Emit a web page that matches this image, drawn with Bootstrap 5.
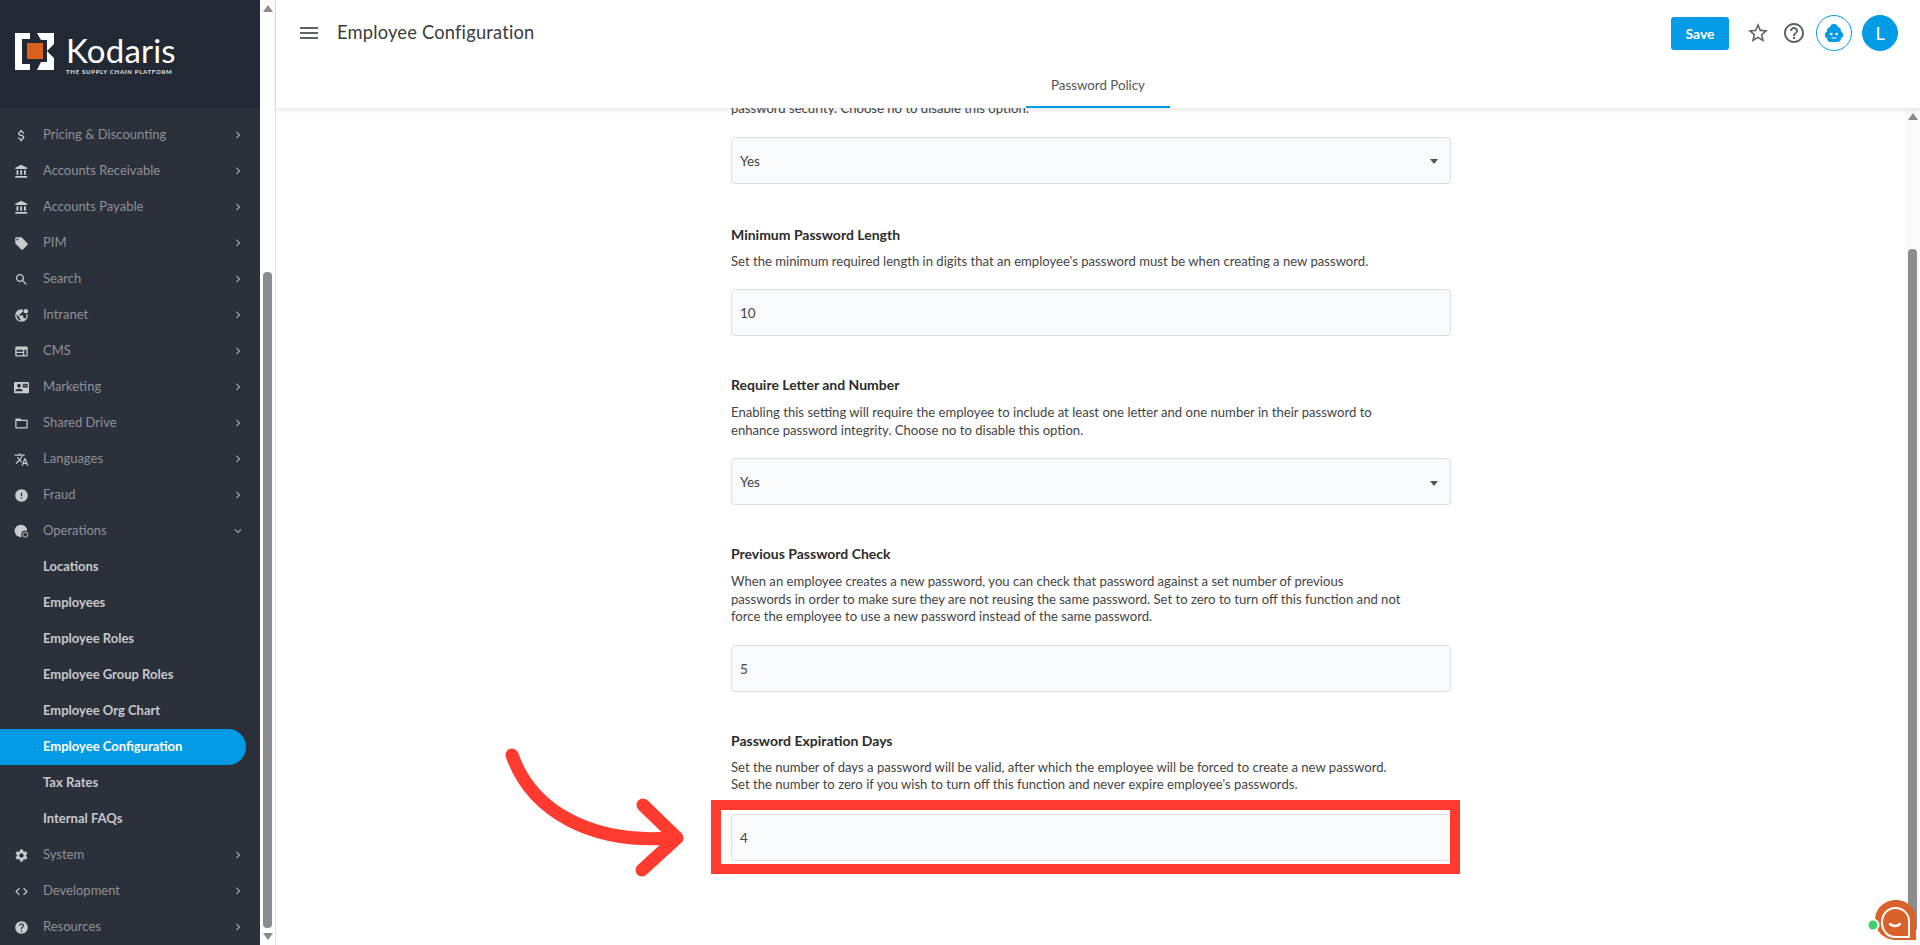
<!DOCTYPE html>
<html lang="en">
<head>
  <meta charset="UTF-8" />
  <title>Employee Configuration</title>
  <link href="https://cdn.jsdelivr.net/npm/bootstrap@5.3.0/dist/css/bootstrap.min.css" rel="stylesheet" />
  <style>
    html, body { height: 100%; overflow: hidden; }
    body { font-family: Lato, "Open Sans", sans-serif; color: #333; background: #fff; }
    svg { fill: currentColor; display: block; }

    .side-wrap { width: 276px; flex: none; border-right: 1px solid #e3e3e3; }
    .side-col { width: 260px; background: #2b303b; }
    .side-logo { height: 108px; background: #232934; padding: 32px 0 0 15px; gap: 11px; }
    .logo-name { font-size: 33px; line-height: 30px; color: #fff; letter-spacing: .2px; margin-top: 3px; }
    .logo-tag { font-size: 6px; line-height: 7px; color: #e6e6e6; font-weight: 700; letter-spacing: .72px; white-space: nowrap; margin-top: 3px; }
    .side-menu { padding-top: 9px; }
    .menu-row { height: 36px; font-size: 13px; color: #8e9196; padding-left: 14px; }
    .menu-icon { width: 15px; height: 15px; margin-right: 14px; color: #c9cbce; flex: none; }
    .menu-arrow { width: 14px; height: 14px; margin: 0 15px 0 auto; color: #a4a8ae; flex: none; }
    .menu-sub { color: #c6c8cb; font-weight: 700; padding-left: 43px; }
    .menu-on { background: #039be5; color: #fff; width: 246px; border-radius: 0 18px 18px 0; }

    .bar-track { width: 15px; flex: none; }
    .bar-soft { background: #fafafa; }
    .bar-up { width: 0; height: 0; border: 5px solid transparent; border-top: 0; border-bottom: 7px solid #8a8a8a; margin: 5px auto 0; }
    .bar-down { width: 0; height: 0; border: 5px solid transparent; border-bottom: 0; border-top: 7px solid #8a8a8a; margin: 0 auto 4px; }
    .bar-thumb { width: 9px; background: #8c8c8c; border-radius: 4px; margin: 0 auto; }
    .thumb-side { margin-top: 260px; height: 656px; margin-bottom: 5px; }
    .thumb-main { margin-top: 129px; height: 683px; }

    .top-head { height: 108px; box-shadow: 0 2px 5px rgba(0,0,0,.1); position: relative; z-index: 2; background: #fff; }
    .head-line { height: 66px; padding: 0 22px 0 21px; }
    .page-name { font-size: 18.3px; color: #3b3b3b; margin-left: 16px; letter-spacing: .2px; }
    .btn-store { background: #039be5; color: #fff; font-size: 14px; font-weight: 700; width: 58px; height: 33px; padding: 0; border-radius: 3px; border: 0; margin-right: 17px; }
    .btn-store:hover { background: #039be5; color: #fff; }
    .head-icon { width: 24px; height: 24px; color: #5f6368; }
    .icon-star { margin-right: 12px; }
    .icon-help { margin-right: 10px; }
    .round-btn { width: 36px; height: 36px; border-radius: 50%; border: 1px solid #039be5; color: #039be5; }
    .round-user { background: #039be5; color: #fff; font-size: 18px; margin-left: 10px; }
    .tab-on { width: 144px; height: 42px; font-size: 13.3px; color: #555; border-bottom: 2px solid #039be5; }

    .body-row { height: 837px; }
    .form-scroll { overflow: hidden; }
    .form-col { width: 720px; margin: -8px auto 0 455px; font-size: 13.1px; line-height: 17.5px; color: #444; }
    .form-col p { margin: 0; width: 672px; }
    .field-name { font-size: 14px; font-weight: 700; color: #2c2c2c; line-height: 18px; margin-top: 40px; }
    .form-col .field-help { margin-top: 10px; }
    .form-col .help-tight { margin-top: 9px; }
    .field-box { height: 47px; background: #f9fafc; border: 1px solid #dcdee2; border-radius: 4px; padding: 3px 8px 0; font-size: 13.5px; color: #444; margin-top: 19px; }
    .box-far { margin-top: 20px; }
    .name-far { margin-top: 42px; }
    .field-caret { width: 0; height: 0; border: 4px solid transparent; border-top: 5px solid #555; border-bottom: 0; margin-left: auto; margin-right: 4px; }

    .mark-box { position: absolute; left: 711px; top: 800px; width: 749px; height: 74px; border: 10px solid #ff3b30; }
    .mark-arrow { position: absolute; left: 500px; top: 740px; fill: none; }
    .chat-bubble { position: absolute; left: 1866px; top: 898px; }
  </style>
</head>
<body class="d-flex">

  <!-- Sidebar -->
  <div class="side-wrap d-flex">
    <div class="side-col d-flex flex-column">
      <div class="side-logo d-flex">
        <svg width="40" height="40" viewBox="0 0 40 40">
          <path fill="#fff" d="M0 1H15V7H7V32H15V38H0z" />
          <path fill="#fff" d="M22 1H39V12L32 19L39 26V38H22L26 30H32V8H26z" />
          <rect x="8" y="8" width="24" height="22" fill="#232934" />
          <rect x="12" y="11" width="16" height="16" fill="#d9601f" />
        </svg>
        <div>
          <div class="logo-name">Kodaris</div>
          <div class="logo-tag">THE SUPPLY CHAIN PLATFORM</div>
        </div>
      </div>
      <div class="side-menu" id="side-menu"></div>
    </div>
    <div class="bar-track d-flex flex-column">
      <div class="bar-up"></div>
      <div class="bar-thumb thumb-side"></div>
      <div class="bar-down"></div>
    </div>
  </div>

  <!-- Main -->
  <div class="flex-grow-1 d-flex flex-column">
    <div class="top-head">
      <div class="head-line d-flex align-items-center">
        <svg class="head-icon" viewBox="0 0 24 24"><path d="M3 18h18v-2H3v2zm0-5h18v-2H3v2zm0-7v2h18V6H3z" /></svg>
        <span class="page-name">Employee Configuration</span>
        <div class="ms-auto d-flex align-items-center">
          <button class="btn btn-store">Save</button>
          <svg class="head-icon icon-star" viewBox="0 0 24 24"><path d="M22 9.24l-7.19-.62L12 2 9.19 8.63 2 9.24l5.46 4.73L5.82 21 12 17.27 18.18 21l-1.63-7.03L22 9.24zM12 15.4l-3.76 2.27 1-4.28-3.32-2.88 4.38-.38L12 6.1l1.71 4.04 4.38.38-3.32 2.88 1 4.28L12 15.4z" /></svg>
          <svg class="head-icon icon-help" viewBox="0 0 24 24"><path d="M11 18h2v-2h-2v2zm1-16C6.48 2 2 6.48 2 12s4.48 10 10 10 10-4.48 10-10S17.52 2 12 2zm0 18c-4.41 0-8-3.59-8-8s3.59-8 8-8 8 3.59 8 8-3.59 8-8 8zm0-14c-2.21 0-4 1.79-4 4h2c0-1.1.9-2 2-2s2 .9 2 2c0 2-3 1.75-3 5h2c0-2.25 3-2.5 3-5 0-2.21-1.79-4-4-4z" /></svg>
          <div class="round-btn d-flex align-items-center justify-content-center">
            <svg width="24" height="24" viewBox="0 0 24 24">
              <circle cx="12" cy="7" r="4" />
              <rect x="5" y="6" width="14" height="15" rx="4" />
              <rect x="3" y="11" width="18" height="6" rx="2" />
              <circle cx="9.300" cy="13" r="1.300" fill="#fff" />
              <circle cx="14.700" cy="13" r="1.300" fill="#fff" />
              <rect x="9.500" y="16.500" width="5" height="1" fill="#fff" />
            </svg>
          </div>
          <div class="round-btn round-user d-flex align-items-center justify-content-center">L</div>
        </div>
      </div>
      <div class="d-flex justify-content-center">
        <div class="tab-on d-flex align-items-center justify-content-center">Password Policy</div>
      </div>
    </div>

    <div class="body-row d-flex">
      <div class="form-scroll flex-grow-1">
        <div class="form-col">
          <p>password security. Choose no to disable this option.</p>
          <div class="field-box d-flex align-items-center">Yes<span class="field-caret"></span></div>

          <div class="field-name name-far">Minimum Password Length</div>
          <p class="help-tight">Set the minimum required length in digits that an employee's password must be when creating a new password.</p>
          <div class="field-box d-flex align-items-center">10</div>

          <div class="field-name">Require Letter and Number</div>
          <p class="field-help">Enabling this setting will require the employee to include at least one letter and one number in their password to enhance password integrity. Choose no to disable this option.</p>
          <div class="field-box d-flex align-items-center">Yes<span class="field-caret"></span></div>

          <div class="field-name">Previous Password Check</div>
          <p class="field-help">When an employee creates a new password, you can check that password against a set number of previous passwords in order to make sure they are not reusing the same password. Set to zero to turn off this function and not force the employee to use a new password instead of the same password.</p>
          <div class="field-box d-flex align-items-center">5</div>

          <div class="field-name">Password Expiration Days</div>
          <p class="help-tight">Set the number of days a password will be valid, after which the employee will be forced to create a new password. Set the number to zero if you wish to turn off this function and never expire employee's passwords.</p>
          <div class="field-box box-far d-flex align-items-center">4</div>
        </div>
      </div>
      <div class="bar-track bar-soft d-flex flex-column">
        <div class="bar-up"></div>
        <div class="bar-thumb thumb-main"></div>
      </div>
    </div>
  </div>

  <!-- Annotation -->
  <div class="mark-box"></div>
  <svg class="mark-arrow" width="190" height="140" viewBox="0 0 190 140" stroke="#ff3b30" stroke-width="13" stroke-linecap="round" stroke-linejoin="round">
    <path fill="none" d="M12 15C32 72 92 104 172 98" />
    <path fill="none" d="M143 65l34 33-35 32" />
  </svg>

  <svg class="chat-bubble" width="52" height="46" viewBox="0 0 52 46">
    <path fill="#d9622b" d="M30 2C42 2 50 11 50 23V42H30C18 42 9 33 9 22C9 11 18 2 30 2z" />
    <path fill="none" stroke="#fff" stroke-width="2" d="M29.500 10C37 10 43 16 43 23V39H29.500C22 39 16 33 16 24.500C16 16 22 10 29.500 10z" />
    <path fill="none" stroke="#fff" stroke-width="2.500" stroke-linecap="round" d="M24 26c3 2.500 7 2.500 10 0" />
    <circle cx="7" cy="27" r="6.500" fill="#fff" />
    <circle cx="7" cy="27" r="4.500" fill="#3fce70" />
  </svg>

  <script src="https://cdn.jsdelivr.net/npm/bootstrap@5.3.0/dist/js/bootstrap.bundle.min.js"></script>
  <script>
    const p = {
      money: '<path d="M11.8 10.9c-2.27-.59-3-1.2-3-2.15 0-1.09 1.01-1.85 2.7-1.85 1.78 0 2.44.85 2.5 2.1h2.21c-.07-1.72-1.12-3.3-3.21-3.81V3h-3v2.16c-1.94.42-3.5 1.68-3.5 3.61 0 2.31 1.91 3.46 4.7 4.13 2.5.6 3 1.48 3 2.41 0 .69-.49 1.79-2.7 1.79-2.06 0-2.87-.92-2.98-2.1h-2.2c.12 2.19 1.76 3.42 3.68 3.83V21h3v-2.15c1.95-.37 3.5-1.5 3.5-3.55 0-2.84-2.43-3.81-4.7-4.4z" />',
      bank: '<path d="M4 10v7h3v-7H4zm6 0v7h3v-7h-3zM2 22h19v-3H2v3zm14-12v7h3v-7h-3zm-4.5-9L2 6v2h19V6l-9.500-5z" />',
      tag: '<path d="M21.41 11.58l-9-9C12.05 2.22 11.55 2 11 2H4c-1.100 0-2 .9-2 2v7c0 .55.22 1.05.59 1.42l9 9c.36.36.86.58 1.41.58.55 0 1.05-.22 1.41-.59l7-7c.37-.36.59-.86.59-1.41 0-.55-.23-1.06-.59-1.42zM5.500 7C4.670 7 4 6.330 4 5.500S4.670 4 5.500 4 7 4.670 7 5.500 6.330 7 5.500 7z" />',
      search: '<path d="M15.5 14h-.79l-.28-.27C15.41 12.59 16 11.11 16 9.5 16 5.91 13.09 3 9.5 3S3 5.91 3 9.5 5.91 16 9.5 16c1.61 0 3.09-.59 4.23-1.57l.27.28v.79l5 4.99L20.49 19l-4.99-5zm-6 0C7.01 14 5 11.99 5 9.5S7.01 5 9.5 5 14 7.01 14 9.500 11.99 14 9.5 14z" />',
      globe: '<path d="M12 2C6.48 2 2 6.48 2 12s4.48 10 10 10 10-4.48 10-10S17.52 2 12 2zm-1 17.93c-3.95-.49-7-3.85-7-7.93 0-.62.08-1.21.21-1.79L9 15v1c0 1.100.9 2 2 2v1.930zm6.900-2.540c-.26-.81-1-1.390-1.900-1.390h-1v-3c0-.55-.45-1-1-1H8v-2h2c.55 0 1-.45 1-1V7h2c1.100 0 2-.9 2-2v-.41c2.930 1.190 5 4.060 5 7.410 0 2.080-.8 3.970-2.100 5.390z" /><circle cx="19" cy="5" r="5" fill="#2b303b" /><circle cx="19" cy="5" r="3.500" />',
      web: '<path d="M20 4H4c-1.100 0-2 .9-2 2v12c0 1.100.9 2 2 2h16c1.100 0 2-.9 2-2V6c0-1.100-.9-2-2-2zM4 9h10.500v3.500H4V9zm0 5.500h10.500V18H4v-3.500zM20 18h-3.500V9H20v9z" />',
      contact: '<path d="M21 8V7l-3 2-3-2v1l3 2 3-2zm1-5H2C.9 3 0 3.900 0 5v14c0 1.100.9 2 2 2h20c1.100 0 1.990-.9 1.990-2L24 5c0-1.100-.9-2-2-2zM8 6c1.660 0 3 1.340 3 3s-1.340 3-3 3-3-1.340-3-3 1.340-3 3-3zm6 12H2v-1c0-2 4-3.100 6-3.100s6 1.100 6 3.100v1zm8-6h-8V6h8v6z" />',
      folder: '<path d="M20 6h-8l-2-2H4c-1.100 0-1.990.9-1.990 2L2 18c0 1.100.9 2 2 2h16c1.100 0 2-.9 2-2V8c0-1.100-.9-2-2-2zm0 12H4V8h16v10z" />',
      lang: '<path d="M12.87 15.07l-2.54-2.51.03-.03c1.74-1.94 2.98-4.17 3.71-6.53H17V4h-7V2H8v2H1v1.990h11.170C11.500 7.920 10.440 9.750 9 11.350 8.070 10.320 7.300 9.190 6.690 8h-2c.73 1.630 1.730 3.170 2.980 4.560l-5.090 5.020L4 19l5-5 3.110 3.110.76-2.040zM18.500 10h-2L12 22h2l1.120-3h4.750L21 22h2l-4.500-12zm-2.620 7l1.620-4.330L19.120 17h-3.240z" />',
      error: '<path d="M12 2C6.48 2 2 6.48 2 12s4.48 10 10 10 10-4.48 10-10S17.52 2 12 2zm1 15h-2v-2h2v2zm0-4h-2V7h2v6z" />',
      ops: '<circle cx="11" cy="11" r="10" /><circle cx="18" cy="17" r="6.500" fill="#2b303b" /><circle cx="18" cy="17" r="4" fill="none" stroke="currentColor" stroke-width="1.500" />',
      gear: '<path d="M19.14 12.94c.04-.3.06-.61.06-.94 0-.32-.02-.64-.07-.94l2.030-1.580c.18-.14.23-.41.12-.61l-1.920-3.320c-.12-.22-.37-.29-.59-.22l-2.390.96c-.5-.38-1.030-.7-1.620-.94l-.36-2.540c-.04-.24-.24-.41-.48-.41h-3.840c-.24 0-.43.17-.47.41l-.36 2.540c-.59.24-1.130.57-1.620.94l-2.390-.96c-.22-.08-.47 0-.59.22L2.740 8.870c-.12.21-.08.47.12.61l2.030 1.580c-.05.3-.09.63-.09.94s.02.64.07.94l-2.030 1.580c-.18.14-.23.41-.12.61l1.920 3.320c.12.22.37.29.59.22l2.390-.96c.5.38 1.030.7 1.620.94l.36 2.540c.05.24.24.41.48.41h3.840c.24 0 .44-.17.47-.41l.36-2.540c.59-.24 1.130-.56 1.620-.94l2.390.96c.22.08.47 0 .59-.22l1.920-3.320c.12-.22.07-.47-.12-.61l-2.010-1.580zM12 15.600c-1.980 0-3.600-1.620-3.600-3.600s1.620-3.600 3.600-3.600 3.600 1.620 3.600 3.600-1.620 3.600-3.600 3.600z" />',
      code: '<path d="M9.400 16.600L4.800 12l4.600-4.600L8 6l-6 6 6 6 1.400-1.400zm5.200 0l4.600-4.600-4.600-4.600L16 6l6 6-6 6-1.400-1.400z" />',
      help: '<path d="M12 2C6.48 2 2 6.48 2 12s4.48 10 10 10 10-4.48 10-10S17.52 2 12 2zm1 17h-2v-2h2v2zm2.070-7.750l-.9.920C13.450 12.900 13 13.500 13 15h-2v-.5c0-1.100.45-2.100 1.170-2.830l1.240-1.260c.37-.36.59-.86.59-1.410 0-1.100-.9-2-2-2s-2 .9-2 2H8c0-2.210 1.790-4 4-4s4 1.790 4 4c0 .88-.36 1.680-.93 2.250z" />'
    };
    const right = 'M10 6L8.590 7.410 13.170 12l-4.580 4.590L10 18l6-6z';
    const down = 'M16.590 8.590L12 13.170 7.410 8.590 6 10l6 6 6-6z';

    const items = [
      ['Pricing & Discounting', 'money'], ['Accounts Receivable', 'bank'], ['Accounts Payable', 'bank'],
      ['PIM', 'tag'], ['Search', 'search'], ['Intranet', 'globe'], ['CMS', 'web'], ['Marketing', 'contact'],
      ['Shared Drive', 'folder'], ['Languages', 'lang'], ['Fraud', 'error'], ['Operations', 'ops', 'open'],
      ['Locations'], ['Employees'], ['Employee Roles'], ['Employee Group Roles'], ['Employee Org Chart'],
      ['Employee Configuration', null, 'on'], ['Tax Rates'], ['Internal FAQs'],
      ['System', 'gear'], ['Development', 'code'], ['Resources', 'help']
    ];

    document.getElementById('side-menu').innerHTML = items.map(([label, icon, state]) => {
      if (!icon) {
        return `<div class="menu-row menu-sub d-flex align-items-center ${state === 'on' ? 'menu-on' : ''}">${label}</div>`;
      }
      return `<div class="menu-row d-flex align-items-center">
        <svg class="menu-icon" viewBox="0 0 24 24">${p[icon]}</svg>${label.replace('&', '&amp;')}
        <svg class="menu-arrow" viewBox="0 0 24 24"><path d="${state === 'open' ? down : right}" /></svg>
      </div>`;
    }).join('');
  </script>
</body>
</html>
